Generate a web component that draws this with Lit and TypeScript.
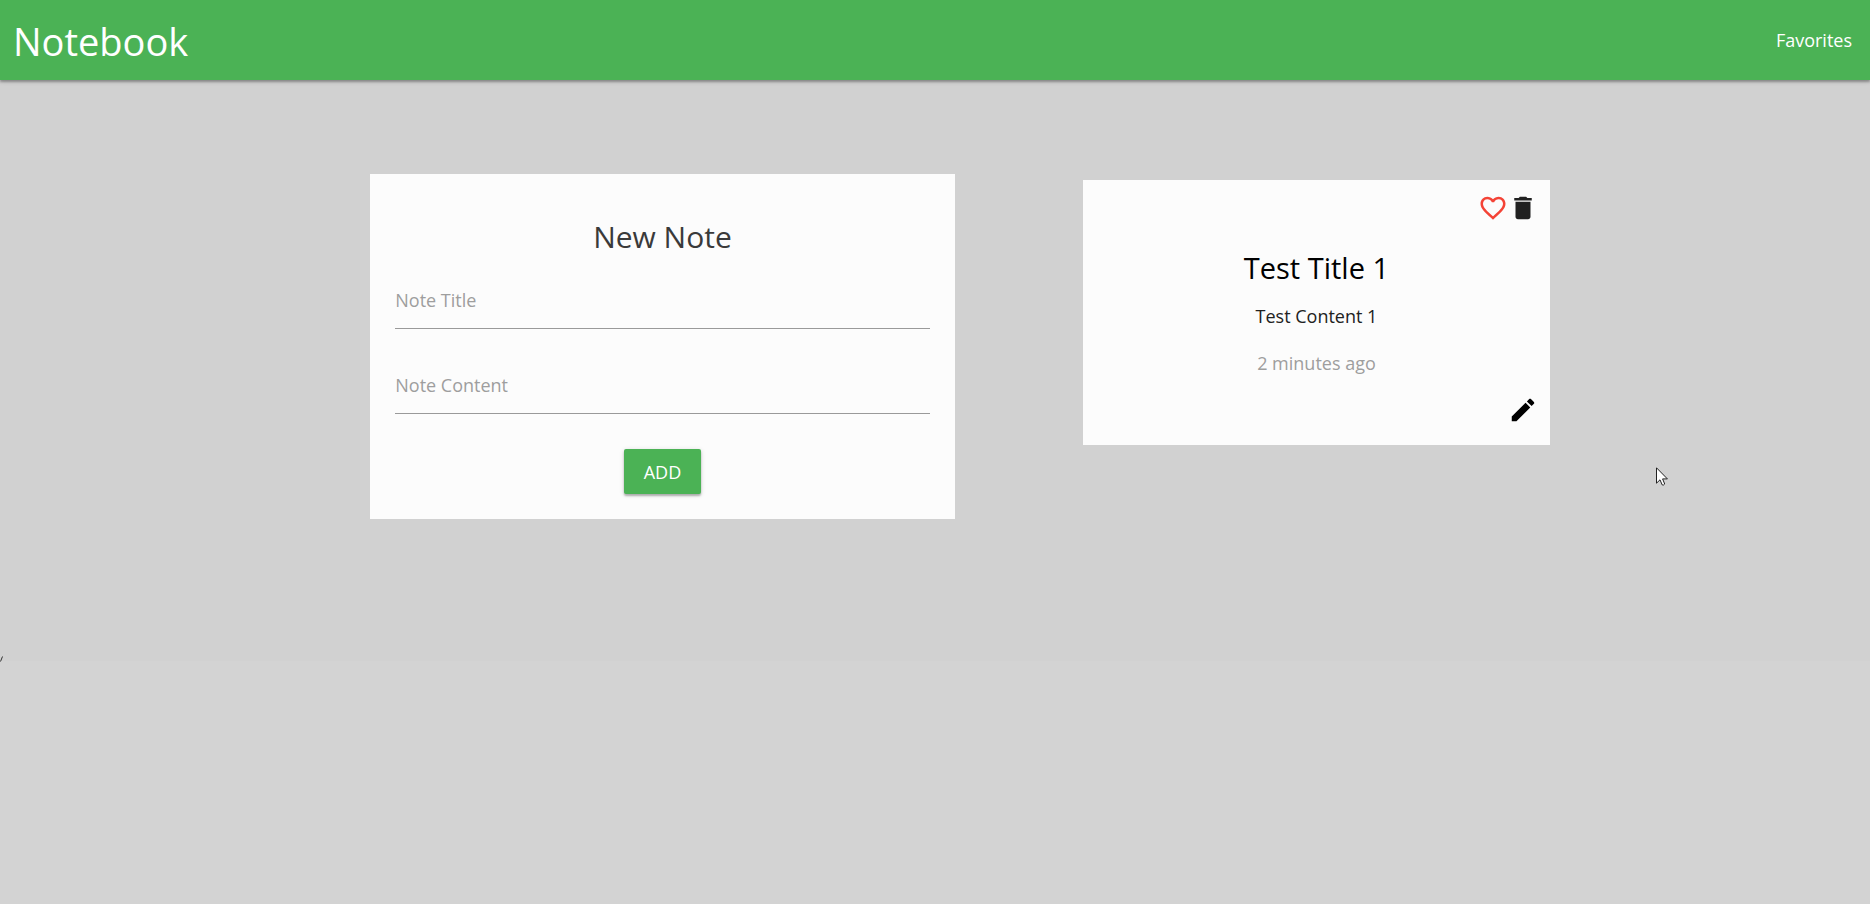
import { LitElement, html, css } from "lit";
import { customElement } from "lit/decorators.js";

@customElement("note-form")
class NoteForm extends LitElement {
  static styles = css`
    :host {
      display: block;
    }
    .card {
      display: flex;
      flex-direction: column;
      align-items: center;
      padding: 40px 25px 25px;
      background: #fcfcfc;
    }
    .title {
      margin: 0 0 21px;
      font-size: 30px;
      line-height: 46px;
      font-weight: 400;
      color: #3a3a3a;
    }
    .field {
      display: grid;
      width: 100%;
      margin: 0 0 37px;
    }
    .input,
    .label {
      grid-area: 1 / 1;
    }
    .input {
      width: 100%;
      height: 48px;
      padding: 0 0 8px;
      box-sizing: border-box;
      border: 0;
      border-bottom: 1px solid #9a9a9a;
      border-radius: 0;
      outline: none;
      background: transparent;
      font: inherit;
      color: #222;
    }
    .label {
      align-self: start;
      padding-top: 5px;
      color: #9e9e9e;
      pointer-events: none;
    }
    .input:focus + .label,
    .input:not(:placeholder-shown) + .label {
      visibility: hidden;
    }
    .add {
      height: 45px;
      margin-top: -2px;
      padding: 0 20px;
      border: 0;
      border-radius: 2px;
      background: #4bb255;
      color: #fff;
      font: inherit;
      text-transform: uppercase;
      box-shadow: 0 2px 2px rgba(0, 0, 0, 0.25), 0 1px 5px rgba(0, 0, 0, 0.15);
      cursor: pointer;
    }
  `;

  render() {
    return html`
      <form class="card" @submit=${(e: Event) => e.preventDefault()}>
        <h4 class="title">New Note</h4>
        <div class="field">
          <input class="input" id="title" type="text" placeholder=" " />
          <label class="label" for="title">Note Title</label>
        </div>
        <div class="field">
          <input class="input" id="content" type="text" placeholder=" " />
          <label class="label" for="content">Note Content</label>
        </div>
        <button class="add" type="submit">Add</button>
      </form>
    `;
  }
}

@customElement("note-card")
class NoteCard extends LitElement {
  static styles = css`
    :host {
      display: block;
    }
    .card {
      display: flex;
      flex-direction: column;
      padding: 13px 12px 20px;
      background: #fcfcfc;
      text-align: center;
    }
    .actions {
      display: flex;
      justify-content: flex-end;
    }
    .icon {
      display: block;
      width: 30px;
      height: 30px;
      padding: 0;
      border: 0;
      background: none;
      cursor: pointer;
    }
    .icon svg {
      display: block;
      width: 30px;
      height: 30px;
      fill: currentColor;
    }
    .heart {
      color: #f44336;
    }
    .trash {
      color: #212121;
    }
    .pencil {
      color: #000;
    }
    .title {
      margin: 22px 0 11px;
      font-size: 29px;
      line-height: 46px;
      font-weight: 400;
      color: #000;
    }
    .text,
    .time {
      margin: 0 0 19px;
      line-height: 28px;
      color: #212121;
    }
    .time {
      margin-bottom: 18px;
      color: #9e9e9e;
    }
  `;

  render() {
    return html`
      <article class="card">
        <div class="actions">
          <button class="icon heart" aria-label="Favorite">
            <svg viewBox="0 0 24 24"><path d="M16.5 3c-1.74 0-3.41.81-4.5 2.09C10.91 3.81 9.24 3 7.5 3 4.42 3 2 5.42 2 8.5c0 3.78 3.4 6.86 8.55 11.54L12 21.35l1.45-1.32C18.6 15.36 22 12.28 22 8.5 22 5.42 19.58 3 16.5 3zm-4.4 15.55l-.1.1-.1-.1C7.14 14.24 4 11.39 4 8.5 4 6.5 5.5 5 7.5 5c1.54 0 3.04.99 3.57 2.36h1.87C13.46 5.99 14.96 5 16.5 5c2 0 3.5 1.5 3.5 3.5 0 2.89-3.14 5.74-7.9 10.05z" /></svg>
          </button>
          <button class="icon trash" aria-label="Delete">
            <svg viewBox="0 0 24 24"><path d="M6 19c0 1.1.9 2 2 2h8c1.1 0 2-.9 2-2V7H6v12zM19 4h-3.5l-1-1h-5l-1 1H5v2h14V4z" /></svg>
          </button>
        </div>
        <h4 class="title">Test Title 1</h4>
        <p class="text">Test Content 1</p>
        <p class="time">2 minutes ago</p>
        <div class="actions">
          <button class="icon pencil" aria-label="Edit">
            <svg viewBox="0 0 24 24"><path d="M3 17.25V21h3.75L17.81 9.94l-3.75-3.75L3 17.25zM20.71 7.04c.39-.39.39-1.02 0-1.41l-2.34-2.34c-.39-.39-1.02-.39-1.41 0l-1.83 1.83 3.75 3.75 1.83-1.83z" /></svg>
          </button>
        </div>
      </article>
    `;
  }
}

@customElement("app-root")
class AppRoot extends LitElement {
  static styles = css`
    :host {
      display: block;
      position: relative;
      min-height: 100vh;
      background: #d3d3d3;
      font-family: "Open Sans", "Noto Sans", sans-serif;
      font-size: 18px;
      line-height: 28px;
    }
    .nav {
      display: flex;
      align-items: center;
      justify-content: space-between;
      position: relative;
      height: 80px;
      padding: 0 18px 0 13px;
      background: #4bb255;
      box-shadow: 0 2px 2px rgba(0, 0, 0, 0.25), 0 1px 5px rgba(0, 0, 0, 0.2);
    }
    .link,
    .brand {
      color: #fff;
      text-decoration: none;
    }
    .brand {
      padding-top: 2px;
      font-size: 38px;
      line-height: 78px;
    }
    .board {
      display: grid;
      grid-template-columns: 5fr 4fr;
      align-items: start;
      gap: 128px;
      padding: 94px 17.1% 142px 19.8%;
      background: #d1d1d1;
    }
    .notes {
      padding-top: 6px;
    }
    .mark {
      position: absolute;
      left: 0;
      top: 656px;
      width: 4px;
      height: 6px;
    }
    .cursor {
      position: absolute;
      left: 1656px;
      top: 467px;
      width: 12px;
      height: 19px;
    }
  `;

  render() {
    return html`
      <nav class="nav">
        <a class="brand" href="#">Notebook</a>
        <a class="link" href="#favorites">Favorites</a>
      </nav>
      <main class="board">
        <note-form></note-form>
        <note-card class="notes"></note-card>
      </main>
      <svg class="mark" viewBox="0 0 4 6" aria-hidden="true">
        <path d="M2.5 0.5L0.5 5.5" stroke="#333" fill="none" />
      </svg>
      <svg class="cursor" viewBox="0 0 12 19" aria-hidden="true">
        <path d="M.5 .8V16.2L4 12.8L6.2 17.9Q7.5 18.6 8.7 17L6.6 11.9H11.4Z" fill="#fff" stroke="#222" stroke-width="1" />
      </svg>
    `;
  }
}
